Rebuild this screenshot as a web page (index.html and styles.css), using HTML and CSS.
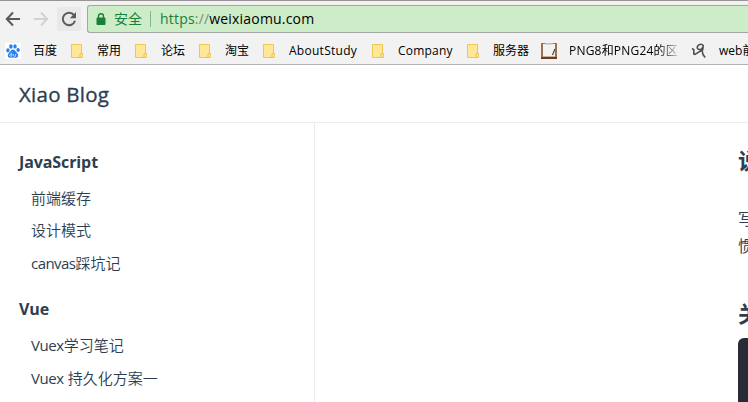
FILE: index.html
```html
<!DOCTYPE html>
<html lang="zh-CN">
<head>
<meta charset="utf-8">
<title>Xiao Blog</title>
<link rel="stylesheet" href="styles.css">
</head>
<body>
<svg width="0" height="0" class="defs">
  <symbol id="folder" viewBox="0 0 14 16">
    <path d="M1.5 1.5h10v9h1v4h-11z" fill="#ffe797" stroke="#ecc955"/>
    <path d="M10 14.5v-3.2q0-1 1.2-1h.3" fill="none" stroke="#e8bf3f"/>
  </symbol>
</svg>
<div class="browser">
  <div class="toolbar">
    <svg class="nav" width="16" height="16" viewBox="0 0 16 16"><path d="M15 8H2.5M8 1.5L1.800 8 8 14.500" fill="none" stroke="#5a5a5a" stroke-width="2"/></svg>
    <svg class="nav" width="16" height="16" viewBox="0 0 16 16"><path d="M1 8h12.500M8 1.500L14.200 8 8 14.500" fill="none" stroke="#d2d2d2" stroke-width="2"/></svg>
    <div class="reload"><svg width="16" height="16" viewBox="0 0 16 16"><path d="M13 4.200A6.200 6.200 0 1 0 14 9.800" fill="none" stroke="#5a5a5a" stroke-width="2"/><path d="M15 1v6.200H8.800z" fill="#5a5a5a"/></svg></div>
    <div class="omnibox">
      <svg width="10" height="12" viewBox="0 0 10 12"><path d="M1 5h8v6.500H1z" fill="#188038" stroke="#188038"/><path d="M2.500 5V3a2.500 2.300 0 0 1 5 0v2" fill="none" stroke="#188038" stroke-width="1.400"/></svg>
      <span class="secure">安全</span>
      <span class="url"><span class="scheme">https</span><span class="slashes">://</span>weixiaomu.com</span>
    </div>
  </div>
  <div class="bookmarks">
    <div class="bm site"><svg width="16" height="16" viewBox="0 0 16 16"><path fill="#fff" d="M0 0h16v16H0z"/><g fill="#2a80f0"><ellipse cx="2.900" cy="7.400" rx="1.700" ry="2.100"/><ellipse cx="5.900" cy="3.500" rx="1.700" ry="2.200"/><ellipse cx="10" cy="3.400" rx="1.700" ry="2.200"/><ellipse cx="13.100" cy="7" rx="1.700" ry="2.100"/><path d="M8 6.600c1.700 0 2.300 1.700 3.600 2.900 2.200 2 2.200 5-.6 5.300-1 .1-1.800-.3-3-.3s-2 .4-3 .3c-2.800-.3-2.800-3.300-.6-5.300C5.700 8.300 6.300 6.600 8 6.600z"/></g><path d="M6.700 9.800v3.400H5.500q-.8 0-.8-1t.8-1h1.200M8.300 11v1.400q0 .8.800.8h1.500V11" fill="none" stroke="#fff" stroke-width=".6"/></svg><span class="zh2">百度</span></div>
    <div class="bm"><svg width="14" height="16"><use href="#folder"/></svg><span class="zh2">常用</span></div>
    <div class="bm"><svg width="14" height="16"><use href="#folder"/></svg><span class="zh2">论坛</span></div>
    <div class="bm"><svg width="14" height="16"><use href="#folder"/></svg><span class="zh2">淘宝</span></div>
    <div class="bm"><svg width="14" height="16"><use href="#folder"/></svg><span class="about">AboutStudy</span></div>
    <div class="bm"><svg width="14" height="16"><use href="#folder"/></svg><span class="company">Company</span></div>
    <div class="bm"><svg width="14" height="16"><use href="#folder"/></svg><span class="zh3">服务器</span></div>
    <div class="bm site"><svg width="16" height="16" viewBox="0 0 16 16"><path fill="#a0714f" d="M0 0h16v16H0z"/><path fill="#f4f3f0" d="M2 1h12v12.500H2z"/><path d="M4 0h8v1.500H4z" fill="#bbb"/><path d="M14 6l-2.500 6" stroke="#444" stroke-width="1.200"/><path d="M0 15h16" stroke="#6e3c1c" stroke-width="2"/></svg><span class="png">PNG8和PNG24的区</span></div>
    <div class="bm site"><svg width="16" height="16" viewBox="0 0 16 16"><path d="M1 5.500l1.800 1.200v4.200q.5 1 2 0L12 6.500M12.200 2.500q-1.500-2-4-.8-2.700 1.800-1.700 3.800 1.700 1.800 4 .3 2-1.600 1.700-3.300 0 3-1 5.500 0 3.500 3 6.500" fill="none" stroke="#505050" stroke-width="1.600"/></svg><span class="web">web前端</span></div>
  </div>
</div>
<header class="site-header"><span>Xiao Blog</span></header>
<div class="layout">
  <aside class="sidebar">
    <section>
      <h2>JavaScript</h2>
      <ul><li>前端缓存</li><li>设计模式</li><li><span class="canvas">canvas</span>踩坑记</li></ul>
    </section>
    <section>
      <h2>Vue</h2>
      <ul><li><span class="vuex">Vuex</span>学习笔记</li><li><span class="vuex">Vuex</span> 持久化方案一</li></ul>
    </section>
  </aside>
  <main>
    <h3>说明</h3>
    <p>写作习<br>惯记录</p>
    <h3>关于</h3>
    <pre></pre>
  </main>
</div>
</body>
</html>
```
FILE: styles.css
```css
* { box-sizing: border-box; }
body {
  margin: 0;
  width: 748px;
  height: 402px;
  overflow: hidden;
  background: #fff;
  color: #2c3e50;
  font-family: "Open Sans", "Noto Sans CJK SC", sans-serif;
}
.defs { position: absolute; }
svg { display: block; flex: none; }
.browser {
  height: 65px;
  background: #f2f2f2;
  border-top: 1px solid #999496;
  border-bottom: 1px solid #b3b3b3;
}
.toolbar { display: flex; height: 35px; padding: 4px 0 0 5px; align-items: flex-start; }
.nav { margin: 6px 12px 0 0; }
.reload {
  width: 24px;
  height: 24px;
  margin: 2px 6px 0 -4px;
  padding: 4px;
  background: #e9e9e9;
  border-radius: 2px;
}
.omnibox {
  display: flex;
  align-items: center;
  flex: 1;
  height: 28px;
  padding-left: 8px;
  border: 1px solid #a3a6a2;
  border-right: 0;
  border-radius: 3px 0 0 3px;
  background: #cdecc8;
  white-space: nowrap;
}
.secure {
  width: 37px;
  margin: 0 9px 0 8px;
  border-right: 1px solid #86b58a;
  color: #188038;
  font-size: 14px;
  line-height: 16px;
}
.url { color: #000; font-size: 14px; letter-spacing: 0.19px; line-height: 20px; }
.scheme { color: #188038; }
.slashes { color: #7a8d78; }
.bookmarks {
  display: flex;
  align-items: center;
  height: 28px;
  padding: 1px 0 0 5px;
  color: #000;
  font-size: 12px;
  white-space: nowrap;
}
.bm { display: flex; align-items: center; flex: none; margin-right: 13px; }
.bm svg { margin-right: 13px; }
.bm.site svg { margin-right: 12px; }
.bm span { line-height: 18px; flex: none; }
.zh2 { width: 24px; }
.about { width: 69px; letter-spacing: 0.27px; }
.company { width: 55px; letter-spacing: 0.2px; }
.zh3 { width: 35px; }
.png {
  width: 109px;
  letter-spacing: 0.2px;
  overflow: hidden;
  -webkit-mask-image: linear-gradient(to right, #000 90px, transparent 112px);
  mask-image: linear-gradient(to right, #000 90px, transparent 112px);
}
.site-header {
  height: 58px;
  padding-left: 19px;
  border-bottom: 1px solid #eaecef;
  font-size: 20.5px;
  -webkit-text-stroke: 0.35px #2c3e50;
  letter-spacing: 0.25px;
  line-height: 59px;
}
.layout { display: flex; height: 279px; }
.sidebar { width: 315px; padding: 23px 0 0 19px; border-right: 1px solid #eaecef; }
h2 { margin: 0; font-size: 16px; line-height: 32px; font-weight: 700; letter-spacing: -0.1px; }
ul { margin: 4px 0 14px; padding: 0 0 0 12px; list-style: none; }
li { height: 32.4px; font-size: 15px; line-height: 32px; white-space: nowrap; font-weight: 350; }
.canvas, .vuex { font-weight: 400; }
.canvas { letter-spacing: -0.55px; }
.vuex { letter-spacing: -0.4px; }
main { flex: 1; padding: 23px 0 0 423px; overflow: hidden; white-space: nowrap; }
h3 { margin: 0; font-size: 22px; line-height: 28px; }
p { margin: 32px 0 39px; font-size: 15.5px; line-height: 27px; }
pre { width: 300px; height: 200px; margin: 11px 0 0; border-radius: 6px; background: #282c34; }
```
